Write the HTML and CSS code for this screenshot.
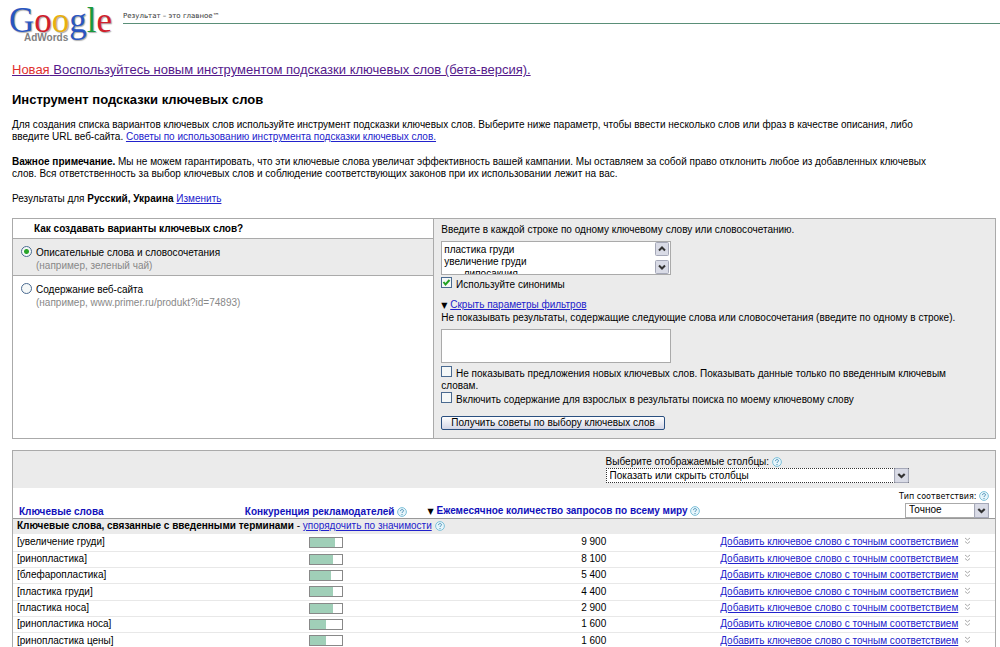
FILE: index.html
```html
<!DOCTYPE html>
<html lang="ru">
<head>
  <meta charset="UTF-8" />
  <meta name="viewport" content="width=device-width, initial-scale=1.0"/>
  <title>Google AdWords: Инструмент подсказки ключевых слов</title>
  <link rel="stylesheet" href="styles.css">
</head>
<body>
  <!-- shared icons -->
  <svg class="sprite" aria-hidden="true">
    <symbol id="help" viewBox="0 0 10 10">
      <circle cx="5" cy="5" r="4.4" fill="#e6f5fb" stroke="#7fc0d8"/>
      <path d="M3.5 4.1C3.5 2 6.6 2.100 6.500 3.900C6.400 4.900 5 4.800 5 6M5 7v1" fill="none" stroke="#4a90b5"/>
    </symbol>
    <symbol id="chevron" viewBox="0 0 14 14">
      <rect x=".5" y=".5" width="13" height="13" rx="1" fill="#d9dbe6" stroke="#a5a8b8"/>
      <path d="M4 5.500l3 3 3-3" fill="none" stroke="#333" stroke-width="2"/>
    </symbol>
    <symbol id="more" viewBox="0 0 7 8">
      <path d="M1 1l2.500 2L6 1M1 4.500l2.500 2L6 4.500" fill="none" stroke="#aaa"/>
    </symbol>
  </svg>

  <header class="header">
    <a class="logo" href="#">
      <span class="logo-google"><span class="blue">G</span><span class="red">o</span><span class="yellow">o</span><span class="blue">g</span><span class="green">l</span><span class="red">e</span></span>
      <span class="logo-product">AdWords</span>
    </a>
    <div class="tagline">Результат – это главное™</div>
  </header>

  <main class="content">
    <p class="promo"><a href="#"><span class="new">Новая</span> Воспользуйтесь новым инструментом подсказки ключевых слов (бета-версия).</a></p>
    <h1>Инструмент подсказки ключевых слов</h1>
    <p>Для создания списка вариантов ключевых слов используйте инструмент подсказки ключевых слов. Выберите ниже параметр, чтобы ввести несколько слов или фраз в качестве описания, либо введите URL веб-сайта. <a href="#">Советы по использованию инструмента подсказки ключевых слов.</a></p>
    <p><b>Важное примечание.</b> Мы не можем гарантировать, что эти ключевые слова увеличат эффективность вашей кампании. Мы оставляем за собой право отклонить любое из добавленных ключевых слов. Вся ответственность за выбор ключевых слов и соблюдение соответствующих законов при их использовании лежит на вас.</p>
    <p>Результаты для <b>Русский, Украина</b> <a href="#">Изменить</a></p>

    <form class="panel">
      <div class="modes">
        <h2>Как создавать варианты ключевых слов?</h2>
        <label class="mode selected">
          <input type="radio" name="mode" checked>
          <span>Описательные слова и словосочетания<small>(например, зеленый чай)</small></span>
        </label>
        <label class="mode">
          <input type="radio" name="mode">
          <span>Содержание веб-сайта<small>(например, www.primer.ru/produkt?id=74893)</small></span>
        </label>
      </div>
      <div class="options">
        <label for="words">Введите в каждой строке по одному ключевому слову или словосочетанию.</label>
        <div class="words">
          <textarea id="words">пластика груди
увеличение груди
       липосакция</textarea>
          <div class="scroll">
            <svg class="up"><use href="#chevron"/></svg>
            <svg><use href="#chevron"/></svg>
          </div>
        </div>
        <label class="check"><input type="checkbox" checked> Используйте синонимы</label>
        <div class="filters"><span class="arrow">▼</span> <a href="#">Скрыть параметры фильтров</a></div>
        <label for="exclude">Не показывать результаты, содержащие следующие слова или словосочетания (введите по одному в строке).</label>
        <textarea id="exclude"></textarea>
        <label class="check"><input type="checkbox"> Не показывать предложения новых ключевых слов. Показывать данные только по введенным ключевым словам.</label>
        <label class="check"><input type="checkbox"> Включить содержание для взрослых в результаты поиска по моему ключевому слову</label>
        <button type="button">Получить советы по выбору ключевых слов</button>
      </div>
    </form>

    <section class="results">
      <div class="columns-bar">
        <div class="columns-field">
          <label for="columns">Выберите отображаемые столбцы: <svg class="help"><use href="#help"/></svg></label>
          <div class="select focused">
            <select id="columns"><option>Показать или скрыть столбцы</option></select>
            <svg><use href="#chevron"/></svg>
          </div>
        </div>
      </div>
      <table>
        <colgroup><col class="c-word"><col class="c-comp"><col class="c-count"><col class="c-add"></colgroup>
        <thead>
          <tr>
            <th>Ключевые слова</th>
            <th>Конкуренция рекламодателей <svg class="help"><use href="#help"/></svg></th>
            <th class="sorted"><span class="arrow">▼</span> Ежемесячное количество запросов по всему миру <svg class="help"><use href="#help"/></svg></th>
            <th class="match">
              <label for="match">Тип соответствия: <svg class="help"><use href="#help"/></svg></label>
              <div class="select">
                <select id="match"><option>Точное</option></select>
                <svg><use href="#chevron"/></svg>
              </div>
            </th>
          </tr>
          <tr class="group">
            <td colspan="4"><b>Ключевые слова, связанные с введенными терминами</b> - <a href="#">упорядочить по значимости</a> <svg class="help"><use href="#help"/></svg></td>
          </tr>
        </thead>
        <tbody>
          <tr>
            <td>[увеличение груди]</td>
            <td><div class="bar"><div style="width: 80%"></div></div></td>
            <td>9 900</td>
            <td><a href="#">Добавить ключевое слово с точным соответствием</a><svg class="more"><use href="#more"/></svg></td>
          </tr>
          <tr>
            <td>[ринопластика]</td>
            <td><div class="bar"><div style="width: 72%"></div></div></td>
            <td>8 100</td>
            <td><a href="#">Добавить ключевое слово с точным соответствием</a><svg class="more"><use href="#more"/></svg></td>
          </tr>
          <tr>
            <td>[блефаропластика]</td>
            <td><div class="bar"><div style="width: 67%"></div></div></td>
            <td>5 400</td>
            <td><a href="#">Добавить ключевое слово с точным соответствием</a><svg class="more"><use href="#more"/></svg></td>
          </tr>
          <tr>
            <td>[пластика груди]</td>
            <td><div class="bar"><div style="width: 72%"></div></div></td>
            <td>4 400</td>
            <td><a href="#">Добавить ключевое слово с точным соответствием</a><svg class="more"><use href="#more"/></svg></td>
          </tr>
          <tr>
            <td>[пластика носа]</td>
            <td><div class="bar"><div style="width: 72%"></div></div></td>
            <td>2 900</td>
            <td><a href="#">Добавить ключевое слово с точным соответствием</a><svg class="more"><use href="#more"/></svg></td>
          </tr>
          <tr>
            <td>[ринопластика носа]</td>
            <td><div class="bar"><div style="width: 52%"></div></div></td>
            <td>1 600</td>
            <td><a href="#">Добавить ключевое слово с точным соответствием</a><svg class="more"><use href="#more"/></svg></td>
          </tr>
          <tr>
            <td>[ринопластика цены]</td>
            <td><div class="bar"><div style="width: 52%"></div></div></td>
            <td>1 600</td>
            <td><a href="#">Добавить ключевое слово с точным соответствием</a><svg class="more"><use href="#more"/></svg></td>
          </tr>
        </tbody>
      </table>
    </section>
  </main>
</body>
</html>
```
FILE: styles.css
```css
* {
  box-sizing: border-box;
}

body {
  margin: 0;
  font-family: "Liberation Sans", Arial, sans-serif;
  font-size: 10px;
  line-height: 12px;
  color: #000;
  background-color: #fff;
}

a {
  color: #2222cc;
}

.sprite {
  display: none;
}

/* header */
.header {
  display: flex;
  gap: 11px;
  height: 48px;
  padding-left: 9px;
}

.logo {
  display: flex;
  flex-direction: column;
  text-decoration: none;
}

.logo-google {
  font-family: "Liberation Serif", "Times New Roman", serif;
  font-size: 35px;
  line-height: 42px;
  height: 32px;
  text-shadow: 1px 1px 1px #aaa;
}

.logo-product {
  padding-left: 15px;
  font-size: 10px;
  line-height: 11px;
  font-weight: bold;
  color: #808080;
}

.blue { color: #2a56c0; }
.red { color: #d0202c; }
.yellow { color: #e8b010; }
.green { color: #189a3c; }

.tagline {
  flex: 1;
  height: 24px;
  padding-top: 11px;
  border-bottom: 1px solid #5a8f78;
  font-family: "DejaVu Sans", Verdana, sans-serif;
  font-size: 7px;
  line-height: 10px;
  color: #333;
}

/* intro */
.content {
  padding: 14px 4px 0 12px;
}

.content p {
  max-width: 930px;
  margin: 0 0 13px;
}

.content .promo {
  margin: 0 0 14px;
  font-size: 13px;
  line-height: 16px;
}

.promo a {
  color: #551a8b;
}

.promo .new {
  color: #e03030;
}

h1 {
  margin: 0 0 11px;
  font-size: 13px;
  line-height: 16px;
}

/* options panel */
.panel {
  display: flex;
  margin-bottom: 11px;
  border: 1px solid #aaa;
}

.modes {
  width: 42.8%;
}

.modes h2 {
  margin: 0;
  padding: 4px 0 3px 21px;
  font-size: 10px;
  line-height: 12px;
}

.mode {
  display: flex;
  gap: 4px;
  padding: 7px 8px 3px;
  line-height: 13px;
}

.mode.selected {
  border-top: 1px solid #aaa;
  border-bottom: 1px solid #aaa;
  background-color: #ebebeb;
}

.mode small {
  display: block;
  font-size: 10px;
  color: #888;
}

input {
  appearance: none;
  flex: none;
  width: 11px;
  height: 11px;
  margin: 0;
  border: 1px solid #4a6a90;
  background-color: #f5f8f8;
}

input[type="radio"] {
  border-radius: 50%;
}

input[type="radio"]:checked {
  background-image: radial-gradient(#2aa52a 2px, transparent 3px);
}

input[type="checkbox"]:checked {
  background-image: url("data:image/svg+xml,%3Csvg xmlns='http://www.w3.org/2000/svg' viewBox='0 0 9 9'%3E%3Cpath d='M1.500 4l2 2.500L7.500 2' fill='none' stroke='%2321a121' stroke-width='2'/%3E%3C/svg%3E");
}

.options {
  flex: 1;
  padding: 5px 32px 8px 7px;
  border-left: 1px solid #aaa;
  background-color: #ebebeb;
}

.options label {
  display: block;
}

.words {
  display: flex;
  width: 230px;
  height: 34px;
  margin: 5px 0 2px;
  border: 1px solid #aaa;
  background-color: #fff;
}

textarea {
  display: block;
  width: 230px;
  height: 34px;
  padding: 2px;
  border: 1px solid #aaa;
  font: inherit;
  background-color: #fff;
  resize: none;
  overflow: hidden;
}

.words textarea {
  flex: 1;
  height: 32px;
  border: none;
}

.scroll {
  display: flex;
  flex-direction: column;
  justify-content: space-between;
  width: 15px;
}

.scroll svg {
  width: 14px;
  height: 14px;
}

.scroll .up {
  transform: rotate(180deg);
}

.check input {
  margin-right: 1px;
}

.filters {
  margin-top: 8px;
}

.arrow {
  font-family: "DejaVu Sans", sans-serif;
  font-size: 8px;
  color: #000;
}

#exclude {
  margin: 5px 0 3px;
}

button {
  display: block;
  height: 14px;
  margin-top: 10px;
  padding: 0 9px;
  border: 1px solid #2a4f80;
  border-radius: 2px;
  font: inherit;
  line-height: 12px;
  background-image: linear-gradient(#fff, #d4d6e6);
}

/* results */
.results {
  border: 1px solid #aaa;
}

.columns-bar {
  height: 37px;
  padding-top: 5px;
  background-color: #ebebeb;
}

.columns-field {
  width: 303px;
  margin: 0 8.8% 0 auto;
}

.columns-field label {
  display: block;
}

.help {
  width: 10px;
  height: 10px;
  vertical-align: -2px;
}

.select {
  position: relative;
  height: 15px;
}

.select select {
  appearance: none;
  width: 100%;
  height: 100%;
  padding: 0 3px;
  border: 1px solid #aaa;
  border-radius: 0;
  font: inherit;
  color: #000;
  background-color: #fff;
}

.focused select {
  border: 1px dotted #333;
}

.select svg {
  position: absolute;
  top: 0;
  right: 0;
  width: 15px;
  height: 15px;
}

table {
  width: 100%;
  table-layout: fixed;
  border-collapse: collapse;
}

.c-word { width: 23%; }
.c-comp { width: 18%; }
.c-count { width: 30%; }
.c-add { width: 29%; }

td, th {
  padding: 0 4px;
  text-align: left;
  white-space: nowrap;
}

th {
  height: 30px;
  padding: 0 6px;
  vertical-align: bottom;
  color: #1111bb;
  border-bottom: 1px solid #999;
}

.sorted {
  padding-left: 12px;
}

.match {
  font-weight: normal;
  color: #000;
}

.match label {
  display: block;
  font-family: "DejaVu Sans", Verdana, sans-serif;
  font-size: 8px;
  text-align: right;
}

.match .select {
  width: 84px;
  margin-left: auto;
}

.group td {
  height: 16px;
  background-color: #ebebeb;
}

tbody td {
  height: 16px;
  border-bottom: 1px solid #e8e8e8;
}

tbody tr:nth-child(3n + 1) td {
  height: 17px;
}

tbody td:nth-child(2) {
  padding-left: 70px;
}

tbody td:nth-child(3) {
  padding-right: 104px;
  text-align: right;
}

tbody td:nth-child(4) {
  padding-left: 10px;
}

.bar {
  width: 34px;
  height: 11px;
  border: 1px solid #888;
}

.bar div {
  height: 100%;
  background-color: #a0cfb8;
}

.more {
  width: 7px;
  height: 8px;
  margin-left: 6px;
}
```
